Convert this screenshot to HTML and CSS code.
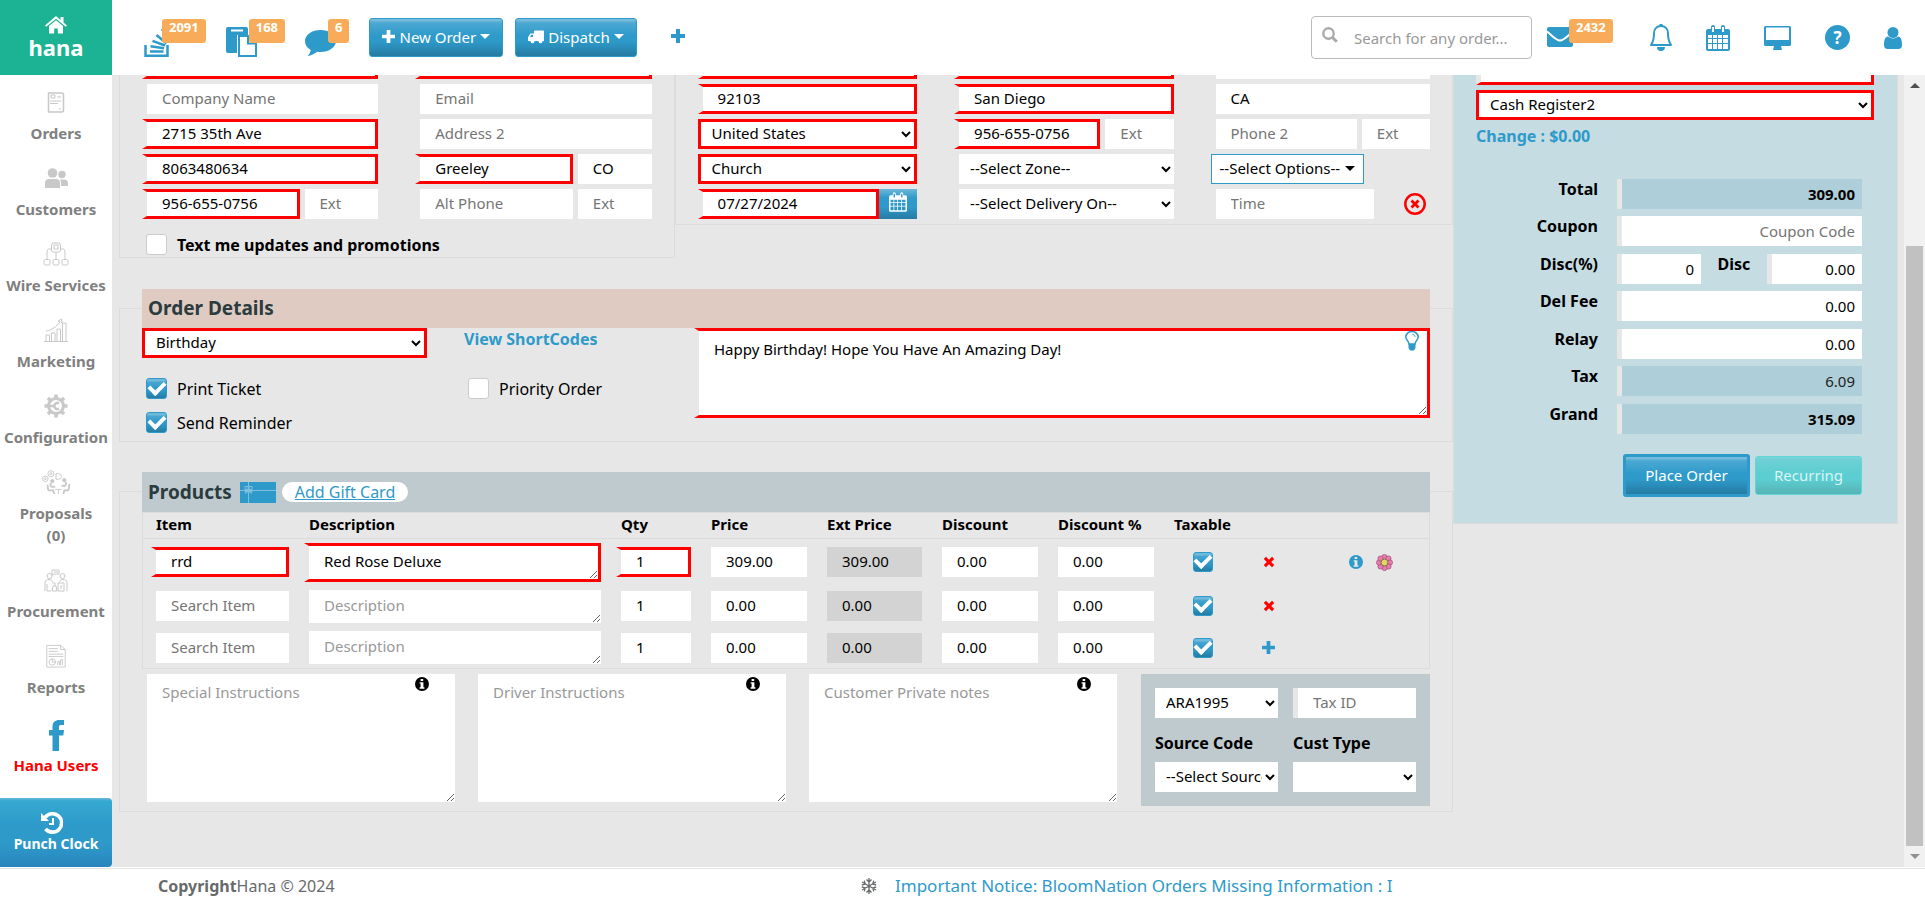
FILE: index.html
```html
<!DOCTYPE html>
<html lang="en">
<head>
<meta charset="utf-8">
<title>Hana - Order Entry</title>
<link rel="stylesheet" href="styles.css">
</head>
<body>
<svg class="sprite" aria-hidden="true">
  <symbol id="check-x" viewBox="0 0 12 12"><path d="M3 .8 6 3.8 9 .8 11.2 3 8.2 6l3 3L9 11.2l-3-3-3 3L.8 9l3-3-3-3z"/></symbol>
  <symbol id="plus" viewBox="0 0 14 14"><path d="M5 0h4v5h5v4H9v5H5V9H0V5h5z"/></symbol>
  <symbol id="info" viewBox="0 0 14 14"><path fill-rule="evenodd" d="M7 0a7 7 0 1 1 0 14A7 7 0 0 1 7 0zM5.600 2v2h2.600V2zM4.600 5.200v1.300h1v3.700h-1v1.500h4.800v-1.500h-1v-5z"/></symbol>
  <symbol id="calendar" viewBox="0 0 24 26"><path fill-rule="evenodd" d="M2 4h3V2a2 2 0 0 1 4 0v2h6V2a2 2 0 0 1 4 0v2h3a2 2 0 0 1 2 2v18a2 2 0 0 1-2 2H2a2 2 0 0 1-2-2V6a2 2 0 0 1 2-2zm4-2v5h2V2zm10 0v5h2V2zM2 10v3h4v-3zm5 0v3h4v-3zm5 0v3h4v-3zm5 0v3h5v-3zM2 14v4h4v-4zm5 0v4h4v-4zm5 0v4h4v-4zm5 0v4h5v-4zM2 19v5h4v-5zm5 0v5h4v-5zm5 0v5h4v-5zm5 0v5h5v-5z"/></symbol>
</svg>

<header class="topbar">
  <a class="logo" href="#">
    <svg width="22" height="18" viewBox="0 0 22 18" aria-hidden="true"><path d="M11 0 0 9.500l1.200 1.300L11 2.700l9.800 8.100L22 9.500 18.500 6.500V1h-3v3zM11 4.200 4 10v7.500h5.200V12.500h3.600v5H18V10z"/></svg>
    <span>hana</span>
  </a>
  <nav class="queue">
    <a class="counter" href="#" aria-label="Orders waiting">
      <svg width="26" height="30" viewBox="0 0 26 30" fill="none" stroke="#2e9aca" aria-hidden="true"><path stroke-width="2.500" d="M1.500 18v10.700h22V18"/><path stroke-width="2.500" d="M6 24.500h13.500M6.500 19.300l13.500 2M8.500 13.800l12.500 4.700M12.500 8l10 8.500M18 2l6.500 11"/></svg>
      <span class="badge">2091</span>
    </a>
    <a class="counter" href="#" aria-label="Copied orders">
      <svg width="31" height="30" viewBox="0 0 31 30" aria-hidden="true"><path fill="#2e9aca" d="M2 0h18a2 2 0 0 1 2 2v24H2a2 2 0 0 1-2-2V2a2 2 0 0 1 2-2z"/><path fill="#fff" d="M5 2.500h12v2H5zM11 8h14l6 6v16H11z"/><path fill="#fff" stroke="#2e9aca" stroke-width="2" d="M13 9h9v7.500h8V29H13zM22 9l8 7.500"/></svg>
      <span class="badge">168</span>
    </a>
    <a class="counter" href="#" aria-label="Messages">
      <svg width="31" height="26" viewBox="0 0 31 26" aria-hidden="true"><path fill="#2e9aca" d="M15.500 0C24 0 31 4.800 31 11s-7 11-15.500 11c-1.200 0-2.300-.1-3.400-.3C9.500 24 6 25.600 2.500 26c1.800-1.500 3-3.600 3.200-6C2.200 18 0 14.800 0 11 0 4.800 7 0 15.500 0z"/></svg>
      <span class="badge">6</span>
    </a>
  </nav>
  <div class="actions">
    <button class="btn" type="button"><svg width="13" height="13" aria-hidden="true"><use href="#plus"/></svg>New Order<i class="caret"></i></button>
    <button class="btn" type="button"><svg width="16" height="14" viewBox="0 0 16 14" aria-hidden="true"><path fill-rule="evenodd" d="M6 1.500A1 1 0 0 1 7 .5h8a1 1 0 0 1 1 1V11h-1.500a2 2 0 0 1-4 0h-4a2 2 0 0 1-4 0H0V7l2.500-3.500H6zM2 7h3V4.700H3.400z"/><circle cx="4.500" cy="11.500" r="1.700"/><circle cx="12.500" cy="11.500" r="1.700"/></svg>Dispatch<i class="caret"></i></button>
    <button class="icon-btn" type="button" aria-label="Add"><svg width="14" height="14" aria-hidden="true"><use href="#plus"/></svg></button>
  </div>
  <div class="tools">
    <label class="search">
      <svg width="16" height="16" viewBox="0 0 16 16" fill="none" stroke="#aaa" aria-hidden="true"><circle cx="6.500" cy="6.500" r="5.200" stroke-width="2.400"/><path stroke-width="3" d="m10.500 10.500 4.300 4.300"/></svg>
      <input type="search" placeholder="Search for any order..." aria-label="Search for any order">
    </label>
    <a class="counter mail" href="#" aria-label="Mail">
      <svg width="26" height="20" viewBox="0 0 26 20" aria-hidden="true"><path fill="#2e9aca" d="M0 2a2 2 0 0 1 2-2h22a2 2 0 0 1 2 2v16a2 2 0 0 1-2 2H2a2 2 0 0 1-2-2z"/><path fill="none" stroke="#fff" stroke-width="2" d="M0 4.500c4 3 9 9 13 9s9-6 13-9"/></svg>
      <span class="badge">2432</span>
    </a>
    <div class="shortcuts">
      <a href="#" aria-label="Notifications"><svg width="22" height="27" viewBox="0 0 22 27" aria-hidden="true"><path fill="none" stroke="#2e9aca" stroke-width="2" stroke-linejoin="round" d="M11 2c4.500 0 7 3.200 7 7.500 0 6 1 8.500 3 11.500H1c2-3 3-5.500 3-11.500C4 5.200 6.500 2 11 2z"/><path fill="#2e9aca" d="M9.500 0h3v2h-3zM7 23h8a4 4 0 0 1-8 0z"/></svg></a>
      <a href="#" aria-label="Calendar"><svg width="24" height="26" aria-hidden="true"><use href="#calendar"/></svg></a>
      <a href="#" aria-label="Display"><svg width="27" height="24" viewBox="0 0 27 24" aria-hidden="true"><path fill-rule="evenodd" d="M1.500 0h24A1.500 1.500 0 0 1 27 1.500v17a1.500 1.500 0 0 1-1.500 1.500H17l1 4H9l1-4H1.500A1.500 1.500 0 0 1 0 18.500v-17A1.500 1.500 0 0 1 1.500 0zM2 1.500V14h23V1.500z"/></svg></a>
      <a href="#" aria-label="Help"><span class="help">?</span></a>
      <a href="#" aria-label="Account"><svg width="18" height="22" viewBox="0 0 18 22" aria-hidden="true"><circle cx="9" cy="5.500" r="5.500"/><path d="M4 9.500a7 7 0 0 0 10 0c3 .5 4 3.500 4 8.500 0 2.500-1.500 4-3.500 4h-11C1.500 22 0 20.500 0 18c0-5 1-8 4-8.500z"/></svg></a>
    </div>
  </div>
</header>

<div class="body">
  <nav class="sidebar">
    <a class="nav-item" href="#"><svg width="24" height="24" viewBox="0 0 24 24"><path d="M4.500 3h13a2 2 0 0 1 2 2v15a2 2 0 0 1-2 2h-13z" stroke-width="1.500"/><path d="M7 5h4v3H7zM6 11h11M6 13.500h8M13 7h4M15 19h2"/></svg>Orders</a>
    <a class="nav-item" href="#"><svg width="24" height="24" viewBox="0 0 24 24"><g fill="#c8c8c8" stroke="none"><circle cx="8.500" cy="7" r="4.800"/><circle cx="18" cy="8.500" r="3.700"/><path d="M1 22v-5c0-3 2-4 4-4h7c2 0 4 1 4 4v5zM17 20v-4l-1-2.500h4c2.500 0 4 1 4 3.500v3z"/></g></svg>Customers</a>
    <a class="nav-item" href="#"><svg width="26" height="24" viewBox="0 0 26 24"><rect x="8.500" y="1" width="9" height="9" rx="2"/><rect x="11" y="3" width="4" height="4"/><path d="M13 10v7M8.500 7H6C4 7 4 9 4 17M17.500 7H20c2 0 2 2 2 10"/><rect x="1" y="17.500" width="6" height="5.500" rx="1.500"/><rect x="10" y="17.500" width="6" height="5.500" rx="1.500"/><rect x="19" y="17.500" width="6" height="5.500" rx="1.500"/></svg>Wire Services</a>
    <a class="nav-item" href="#"><svg width="26" height="24" viewBox="0 0 26 24"><path d="M1 23.500h24M3 23v-6h3.500v6M8.500 23v-8H12v8M14 23V11h3.500v12M19.500 23V5H23v18M3 13c6-1 10-4 14-9l-2-.8L18.500 1l.5 4-1.500-1"/></svg>Marketing</a>
    <a class="nav-item" href="#"><svg width="24" height="24" viewBox="0 0 24 24"><circle cx="12" cy="12" r="7.500" stroke-width="3"/><path stroke-width="3.500" d="M12 .5v4M12 19.500v4M.5 12h4M19.500 12h4M4 4l2.500 2.500M17.500 17.500 20 20M4 20l2.500-2.500M17.500 6.500 20 4"/><path stroke-width="2.500" d="M4 12h6M15 9.500a3 3 0 1 0 0 5"/></svg>Configuration</a>
    <a class="nav-item" href="#"><svg width="30" height="26" viewBox="0 0 30 26"><circle cx="3.500" cy="9.500" r="3"/><circle cx="3.500" cy="9.500" r="1"/><circle cx="9.500" cy="4" r="3.300"/><circle cx="9.500" cy="4" r="1.200"/><path d="M15 10V4h3a3 3 0 0 1 0 6zM14 21h7M17.500 21v5"/><circle cx="24" cy="11" r="1.800" fill="#c8c8c8"/><circle cx="11" cy="12" r="1.800" fill="#c8c8c8"/><path stroke-width="2" d="M6 16c0 4 0 5 1 6h5l1 4M29.500 15c-.5 4 0 6-1.500 7h-4l-1 4M9 14c0 4 1 5 5 4M26 13c0 4-1 5-5 4"/></svg>Proposals<br>(0)</a>
    <a class="nav-item" href="#"><svg width="24" height="24" viewBox="0 0 24 24"><path d="M8 2h7v4H10L8 7zM10 4h4M3 8a2.500 2.500 0 1 1 5 0 2.500 2.500 0 1 1-5 0zM16 8a2.500 2.500 0 1 1 5 0 2.500 2.500 0 1 1-5 0zM1 23v-8c0-3 2-3.500 4-3.500s4 1 4 4M3 16v7h4M23 23v-8c0-3-2-3.500-4-3.500s-3 1-4 3M14 15h6v8h-6zM16 18h2M16 20h2M9 18h3l1 5H8zM10 15h1v3"/></svg>Procurement</a>
    <a class="nav-item" href="#"><svg width="24" height="26" viewBox="0 0 24 26"><path d="M2 1.500h15L22 6v19H2zM17 1.500V6h5M4 5h10M4 8h10M4 11h16M4 13.500h16M14 23v-4h2v4M17 23v-6h2v6"/><circle cx="8" cy="19.500" r="3.500"/><path d="M8 19.500V16M8 19.500h3.500"/></svg>Reports</a>
    <a class="nav-item users" href="#"><svg width="15" height="31" viewBox="0 0 15 31"><path fill="#2e9aca" stroke="none" d="M15 0v5h-3c-1.500 0-2 .8-2 2.300V10h5l-.7 5.500H10V31H3.500V15.500H0V10h3.500V6.500C3.500 2.200 6 0 10.500 0z"/></svg>Hana Users</a>
    <button class="punch" type="button"><svg width="22" height="22" viewBox="0 0 22 22" fill="none" stroke="#fff" aria-hidden="true"><path stroke-width="3.600" d="M4 5.500A9.200 9.200 0 1 1 4.500 17"/><path stroke-width="2" d="M12 6v6H8"/><path fill="#fff" stroke="none" d="M0 1v8h8z"/></svg>Punch Clock</button>
  </nav>

  <main class="content">
    <div class="workspace">
      <div class="order-form">
        <div class="people">
          <section class="panel sender" aria-label="Customer">
            <div class="cols two">
              <input class="req" aria-label="First name"><input class="req" aria-label="Last name">
              <input placeholder="Company Name" aria-label="Company Name"><input placeholder="Email" aria-label="Email">
              <input class="req" value="2715 35th Ave" aria-label="Address"><input placeholder="Address 2" aria-label="Address 2">
              <input class="req" value="8063480634" aria-label="Zip">
              <div class="pair"><input class="req" value="Greeley" aria-label="City"><input value="CO" aria-label="State"></div>
              <div class="pair"><input class="req" value="956-655-0756" aria-label="Phone"><input placeholder="Ext" aria-label="Phone ext"></div>
              <div class="pair"><input placeholder="Alt Phone" aria-label="Alt Phone"><input placeholder="Ext" aria-label="Alt phone ext"></div>
            </div>
            <label class="check strong"><input type="checkbox">Text me updates and promotions</label>
          </section>
          <section class="panel recipient" aria-label="Recipient">
            <div class="cols three">
              <input class="req" aria-label="Recipient address"><input class="req" aria-label="Attention"><input aria-label="Address 2">
              <input class="req" value="92103" aria-label="Recipient zip"><input class="req" value="San Diego" aria-label="Recipient city"><input value="CA" aria-label="Recipient state">
              <select class="req" aria-label="Country"><option>United States</option></select>
              <div class="pair"><input class="req" value="956-655-0756" aria-label="Recipient phone"><input placeholder="Ext" aria-label="Recipient ext"></div>
              <div class="pair"><input placeholder="Phone 2" aria-label="Phone 2"><input placeholder="Ext" aria-label="Phone 2 ext"></div>
              <select class="req" aria-label="Location type"><option>Church</option></select>
              <select class="inset" aria-label="Zone"><option>--Select Zone--</option></select>
              <button class="options" type="button">--Select Options--<i class="caret"></i></button>
              <div class="date"><input class="req" value="07/27/2024" aria-label="Delivery date"><button type="button" aria-label="Pick a date"><svg width="18" height="20" aria-hidden="true"><use href="#calendar"/></svg></button></div>
              <select class="inset" aria-label="Delivery on"><option>--Select Delivery On--</option></select>
              <div class="time"><input placeholder="Time" aria-label="Time"><button class="icon-btn danger" type="button" aria-label="Remove recipient"><svg width="22" height="22" viewBox="0 0 22 22" aria-hidden="true"><circle cx="11" cy="11" r="9.700" fill="none" stroke="red" stroke-width="2.500"/><path d="m8.500 6.500 2.500 2.500 2.500-2.500 2 2L13 11l2.500 2.500-2 2L11 13l-2.500 2.500-2-2L9 11 6.500 8.500z"/></svg></button></div>
            </div>
          </section>
        </div>

        <section class="panel details">
          <h2 class="bar peach">Order Details</h2>
          <div class="detail-grid">
            <div class="stack">
              <select class="req" aria-label="Occasion"><option>Birthday</option></select>
              <div class="checks">
                <label class="check"><input type="checkbox" checked>Print Ticket</label>
                <label class="check"><input type="checkbox" checked>Send Reminder</label>
              </div>
            </div>
            <div class="stack">
              <a class="codes" href="#">View ShortCodes</a>
              <label class="check"><input type="checkbox">Priority Order</label>
            </div>
            <div class="message">
              <textarea class="req" aria-label="Card message">Happy Birthday! Hope You Have An Amazing Day!</textarea>
              <svg class="bulb" width="14" height="20" viewBox="0 0 14 20" aria-hidden="true"><path fill="#fff" stroke="#2e9aca" stroke-width="1.500" d="M4 13c0-3-3.200-4-3.200-7a6.200 5.500 0 0 1 12.400 0c0 3-3.200 4-3.200 7z"/><path fill="none" stroke="#2e9aca" d="M7.500 3.500c1.500 0 2.500.8 2.500 2.300"/><path fill="#2e9aca" d="M3.500 13h7v4L9 19.500H5L3.500 17z"/></svg>
            </div>
          </div>
        </section>

        <section class="panel products">
          <div class="bar slate"><h2>Products</h2>
            <svg width="36" height="21" viewBox="0 0 36 21" aria-hidden="true"><path fill="#2e9aca" d="M0 0h36v21H0z"/><path fill="none" stroke="#7ec0dd" d="M0 8.500h36M8.500 0v21M5 4.500h3v3H5zM9 4.500h3v3H9zM5 9.500h3l-2 2zM12 9.500H9l2 2z"/></svg>
            <a class="pill" href="#">Add Gift Card</a>
          </div>
          <table class="items">
            <colgroup><col class="c-item"><col class="c-desc"><col class="c-qty"><col class="c-num"><col class="c-mid"><col class="c-num"><col class="c-num"><col class="c-tax"><col class="c-act"><col></colgroup>
            <thead><tr><th>Item</th><th>Description</th><th>Qty</th><th>Price</th><th>Ext Price</th><th>Discount</th><th>Discount %</th><th>Taxable</th><th></th><th></th></tr></thead>
            <tbody>
              <tr>
                <td><input class="req" value="rrd" aria-label="Item"></td><td><textarea class="req" rows="1" aria-label="Description">Red Rose Deluxe</textarea></td><td><input class="req" value="1" aria-label="Qty"></td><td><input value="309.00" aria-label="Price"></td><td><input class="locked" value="309.00" readonly aria-label="Ext Price"></td><td><input value="0.00" aria-label="Discount"></td><td><input value="0.00" aria-label="Discount %"></td>
                <td class="mid"><input type="checkbox" checked aria-label="Taxable"></td>
                <td class="mid"><button class="icon-btn danger" type="button" aria-label="Remove"><svg width="12" height="12" aria-hidden="true"><use href="#check-x"/></svg></button></td>
                <td class="mid extra"><div><button class="icon-btn" type="button" aria-label="Item info"><svg width="14" height="14" aria-hidden="true"><use href="#info"/></svg></button><button class="icon-btn" type="button" aria-label="Arrangement"><svg width="17" height="17" viewBox="0 0 17 17" aria-hidden="true"><g fill="#e87bb0" stroke="#9c5277" stroke-width=".7"><circle cx="8.500" cy="3" r="2.600"/><circle cx="12.500" cy="4.500" r="2.600"/><circle cx="14" cy="8.500" r="2.600"/><circle cx="12.500" cy="12.500" r="2.600"/><circle cx="8.500" cy="14" r="2.600"/><circle cx="4.500" cy="12.500" r="2.600"/><circle cx="3" cy="8.500" r="2.600"/><circle cx="4.500" cy="4.500" r="2.600"/></g><circle cx="8.500" cy="8.500" r="3.400" fill="#e3d56a" stroke="#6d6a2a" stroke-width=".8"/></svg></button></div></td>
              </tr>
              <tr>
                <td><input placeholder="Search Item" aria-label="Item"></td><td><textarea rows="1" placeholder="Description" aria-label="Description"></textarea></td><td><input value="1" aria-label="Qty"></td><td><input value="0.00" aria-label="Price"></td><td><input class="locked" value="0.00" readonly aria-label="Ext Price"></td><td><input value="0.00" aria-label="Discount"></td><td><input value="0.00" aria-label="Discount %"></td>
                <td class="mid"><input type="checkbox" checked aria-label="Taxable"></td>
                <td class="mid"><button class="icon-btn danger" type="button" aria-label="Remove"><svg width="12" height="12" aria-hidden="true"><use href="#check-x"/></svg></button></td><td></td>
              </tr>
              <tr>
                <td><input placeholder="Search Item" aria-label="Item"></td><td><textarea rows="1" placeholder="Description" aria-label="Description"></textarea></td><td><input value="1" aria-label="Qty"></td><td><input value="0.00" aria-label="Price"></td><td><input class="locked" value="0.00" readonly aria-label="Ext Price"></td><td><input value="0.00" aria-label="Discount"></td><td><input value="0.00" aria-label="Discount %"></td>
                <td class="mid"><input type="checkbox" checked aria-label="Taxable"></td>
                <td class="mid"><button class="icon-btn" type="button" aria-label="Add row"><svg width="13" height="13" aria-hidden="true"><use href="#plus"/></svg></button></td><td></td>
              </tr>
            </tbody>
          </table>
          <div class="lower">
            <div class="notes">
              <div class="note"><textarea placeholder="Special Instructions" aria-label="Special Instructions"></textarea><svg width="14" height="14" aria-hidden="true"><use href="#info"/></svg></div>
              <div class="note"><textarea placeholder="Driver Instructions" aria-label="Driver Instructions"></textarea><svg width="14" height="14" aria-hidden="true"><use href="#info"/></svg></div>
              <div class="note"><textarea placeholder="Customer Private notes" aria-label="Customer Private notes"></textarea><svg width="14" height="14" aria-hidden="true"><use href="#info"/></svg></div>
            </div>
            <div class="source">
              <select aria-label="Clerk"><option>ARA1995</option></select>
              <input placeholder="Tax ID" aria-label="Tax ID">
              <label for="source-code">Source Code</label>
              <label for="cust-type">Cust Type</label>
              <select id="source-code"><option>--Select Source--</option></select>
              <select id="cust-type"><option></option></select>
            </div>
          </div>
        </section>
      </div>

      <aside class="summary">
        <input class="req" aria-label="Payment">
        <select class="req" aria-label="Register"><option>Cash Register2</option></select>
        <p class="change">Change : $0.00</p>
        <div class="totals">
          <div class="line"><label for="total">Total</label><input id="total" class="calc bold" value="309.00" readonly></div>
          <div class="line"><label for="coupon">Coupon</label><input id="coupon" placeholder="Coupon Code"></div>
          <div class="line"><label for="discp">Disc(%)</label><div class="split"><input id="discp" value="0"><label for="disc">Disc</label><input id="disc" value="0.00"></div></div>
          <div class="line"><label for="fee">Del Fee</label><input id="fee" value="0.00"></div>
          <div class="line"><label for="relay">Relay</label><input id="relay" value="0.00"></div>
          <div class="line"><label for="tax">Tax</label><input id="tax" class="calc" value="6.09" readonly></div>
          <div class="line"><label for="grand">Grand</label><input id="grand" class="calc bold" value="315.09" readonly></div>
        </div>
        <div class="submit">
          <button class="btn place" type="button">Place Order</button>
          <button class="btn recurring" type="button">Recurring</button>
        </div>
      </aside>
    </div>
  </main>
  <div class="scrollbar" aria-hidden="true"><i class="up"></i><div class="thumb"></div><i class="down"></i></div>
</div>

<footer class="footer">
  <p><b>Copyright</b>Hana © 2024</p>
  <svg width="16" height="16" viewBox="0 0 16 16" fill="none" stroke="#676a6c" stroke-width="1.300" aria-hidden="true"><path d="M8 0v16M1 4l14 8M1 12l14-8M5.500 1.500 8 4l2.500-2.500M5.500 14.500 8 12l2.500 2.500M.8 7l3.400-.9L3.300 2.700M12.700 2.700l-.9 3.400 3.400.9M.8 9l3.400.9-.9 3.400M12.700 13.300l-.9-3.400 3.400-.9"/></svg>
  <a class="notice" href="#">Important Notice: BloomNation Orders Missing Information : I</a>
</footer>
</body>
</html>
```

FILE: styles.css
```css
* { box-sizing: border-box; }
body {
  margin: 0;
  height: 100vh;
  display: flex;
  flex-direction: column;
  overflow: hidden;
  background: #fff;
  color: #000;
  font: 15px/20px "Noto Sans", sans-serif;
}
a { text-decoration: none; color: #2e9aca; }
svg { flex: none; display: block; }
svg:not([fill]) { fill: currentColor; }
.sprite { position: absolute; width: 0; height: 0; }
h2, p { margin: 0; }
h2 { font-size: 19px; line-height: 24px; color: #2c3b3d; }
input, select, textarea, button { font: inherit; color: #000; border-radius: 0; margin: 0; min-width: 0; }
::placeholder { color: #757575; opacity: 1; }
textarea::placeholder { color: #999; }

/* form controls */
input, textarea {
  width: 100%;
  background: #fff;
  border: 0 solid #e7e7e7;
  border-left-width: 5px;
  padding: 0 15px 2px;
}
input, select { height: 30px; }
textarea { display: block; }
select { width: 100%; background: #fff; border: 0; padding: 0 0 2px 7px; }
select.inset { border-left: 5px solid #e7e7e7; }
.req { border: 3px solid red; }
input.req, textarea.req { border-left: 5px solid #e7e7e7; }
input[type="checkbox"] {
  appearance: none;
  flex: none;
  display: grid;
  place-items: center;
  width: 21px;
  height: 21px;
  padding: 0;
  background: #fff;
  border: 1px solid #ccc;
  border-radius: 3px;
}
input[type="checkbox"]:checked {
  border-color: #2e9aca;
  background: linear-gradient(#6fb9da 0, #6fb9da 2px, #4aa6d1 3px, #2e9aca 45%, #2e9aca 60%, #267ba2);
}
input[type="checkbox"]:checked::after {
  content: "";
  width: 12px;
  height: 7px;
  margin-bottom: 5px;
  border: solid #fff;
  border-width: 0 0 4px 4px;
  transform: rotate(-45deg);
}
.check { display: flex; align-items: center; gap: 10px; padding-left: 4px; height: 21px; font-size: 16px; }
.strong { font-weight: 700; }
.caret { border: 5px solid transparent; border-top-color: currentColor; border-bottom: 0; }
.btn {
  height: 39px;
  padding: 0 12px 2px;
  display: flex;
  align-items: center;
  justify-content: center;
  gap: 4px;
  color: #fff;
  border: 1px solid #2e9aca;
  border-radius: 3px;
  background: linear-gradient(#7dbfdd 0, #6cb7d9 2px, #4ba8d2 4px, #2e9aca 45%, #2e9aca 60%, #267ba2);
}
.icon-btn { border: 0; padding: 0; background: none; color: #2e9aca; display: inline-block; vertical-align: middle; }
.danger { color: red; }

/* top bar */
.topbar { flex: none; height: 75px; display: flex; align-items: flex-start; }
.logo {
  width: 112px;
  height: 75px;
  padding-top: 16px;
  display: flex;
  flex-direction: column;
  align-items: center;
  background: #1bb394;
  color: #fff;
  font-size: 22px;
  font-weight: 700;
  line-height: 26px;
}
.queue { display: flex; padding: 19px 0 0 32px; gap: 20px; }
.counter { display: flex; align-items: flex-start; }
.counter svg { margin-top: 8px; }
.counter:last-child svg { margin-top: 11px; }
.counter .badge { margin-left: -8px; }
.badge {
  position: relative;
  height: 24px;
  padding: 0 7px;
  border-radius: 3px;
  background: #f8ac59;
  color: #fff;
  font: 700 13px/17px "Open Sans", sans-serif;
}
.actions { display: flex; align-items: center; gap: 12px; padding: 18px 0 0 20px; }
.actions .icon-btn { margin: 0 0 3px 22px; }
.tools { display: flex; align-items: flex-start; margin-left: auto; padding: 16px 23px 0 0; }
.search { display: flex; width: 221px; height: 43px; padding-left: 10px; border: 1px solid #bbb; border-radius: 4px; }
.search svg { margin-top: 10px; }
.search input { height: 41px; border: 0; padding: 0 0 0 16px; background: none; outline: 0; }
.search ::placeholder { color: #999; }
.mail { padding: 3px 0 0 15px; width: 81px; }
.mail .badge { margin-left: -4px; }
.shortcuts { display: flex; align-items: center; gap: 34px; height: 43px; padding-left: 37px; }
.help {
  display: block;
  width: 25px;
  height: 25px;
  border-radius: 50%;
  background: #2e9aca;
  color: #fff;
  text-align: center;
  font: 700 17px/25px "Noto Sans", sans-serif;
}

/* frame */
.body { flex: 1; min-height: 0; display: flex; }
.sidebar { flex: none; width: 112px; padding-top: 15px; display: flex; flex-direction: column; background: #fff; }
.nav-item {
  flex: none;
  display: block;
  margin-bottom: 22px;
  text-align: center;
  white-space: nowrap;
  font-weight: 700;
  line-height: 22px;
  color: #808080;
}
.nav-item svg { height: 24px; margin: 0 auto 8px; fill: none; stroke: #c8c8c8; }
.nav-item.users { color: red; }
.nav-item.users svg { height: 31px; margin: 0 auto 3px; }
.punch {
  height: 70px;
  margin-top: auto;
  padding: 0;
  display: flex;
  flex-direction: column;
  align-items: center;
  justify-content: center;
  border: 0;
  border-radius: 0 4px 4px 0;
  background: linear-gradient(#6cb7d9 0, #35a9d0 3px, #2e9aca 40%, #2e9aca 65%, #2985bd);
  color: #fff;
  font-size: 14px;
  font-weight: 700;
}
.punch svg { margin-right: 8px; }
.content { flex: 1; min-width: 0; overflow: hidden; background: #e7e7e7; }
.workspace { display: flex; align-items: flex-start; margin-top: -26px; padding: 0 6px 0 7px; }
.order-form { flex: 1; min-width: 0; }
.scrollbar { flex: none; width: 21px; padding: 8px 2px; display: flex; flex-direction: column; align-items: center; background: #f1f1f1; }
.thumb { width: 17px; flex: 1; margin: 158px 0 8px; background: #c1c1c1; }
.scrollbar i { border: 5px solid transparent; }
.scrollbar .up { border-top-width: 0; border-bottom-color: #505050; }
.scrollbar .down { border-bottom-width: 0; border-top-color: #909090; }

/* order panels */
.panel { border: 1px solid #dcdcdc; padding: 0 22px; }
.people { display: grid; grid-template-columns: 556fr 779fr; align-items: start; }
.sender { border-top: 0; }
.recipient { border-top: 0; padding-bottom: 5px; }
.cols { display: grid; column-gap: 37px; row-gap: 5px; }
.two { grid-template-columns: repeat(2, minmax(0, 1fr)); }
.three { grid-template-columns: repeat(3, minmax(0, 1fr)); }
.pair { display: grid; grid-template-columns: 2fr 1fr; }
.sender .check { margin: 15px 0 2px; }
.options { justify-self: start; height: 30px; padding: 0 8px 2px; display: flex; align-items: center; gap: 5px; border: 1px solid #2e9aca; background: #fff; }
.date { display: flex; }
.date button { flex: none; width: 38px; padding: 0 10px 4px; border: 0; color: #fff; background: linear-gradient(#6cb7d9, #2e9aca 30%, #2e9aca 60%, #267ba2); }
.time { display: flex; align-items: center; justify-content: space-between; padding-right: 4px; }
.time input { width: 76%; }
.details { margin-top: 50px; padding-bottom: 8px; }
.products { margin-top: 49px; padding-bottom: 5px; }
.bar { margin-top: -20px; height: 39px; padding: 0 6px 2px; display: flex; align-items: center; }
.peach { background: #dfcbc2; }
.slate { height: 40px; padding-bottom: 0; background: #bfcacf; }
.slate svg { margin-left: 8px; }
.pill { margin-left: 6px; padding: 0 13px; border-radius: 10px; background: #fff; font-size: 16px; text-decoration: underline; }
.detail-grid { display: grid; grid-template-columns: 322fr 230fr 736fr; align-items: start; }
.stack > select { width: calc(100% - 37px); margin-bottom: 20px; display: block; }
.checks { display: grid; gap: 13px; }
.codes { display: block; height: 50px; line-height: 22px; font-size: 16px; font-weight: 700; }
.message { position: relative; }
.message textarea { height: 90px; padding: 8px 15px; }
.bulb { position: absolute; top: 3px; right: 11px; }

/* product rows */
.items { width: 100%; table-layout: fixed; border: 1px solid #dcdcdc; border-collapse: separate; border-spacing: 0; }
.items th { height: 26px; padding: 0 0 0 13px; text-align: left; vertical-align: top; border-bottom: 1px solid #dcdcdc; line-height: 22px; white-space: nowrap; }
.items td { height: 42px; padding: 0 7px 0 8px; vertical-align: middle; }
.items tbody tr:first-child td { height: 46px; }
.items tbody tr:last-child td { height: 41px; }
.items td > input { display: block; }
.items textarea { height: 33px; padding: 4px 15px 0; overflow: hidden; line-height: 22px; }
.items textarea.req { height: 39px; }
.items input[type="checkbox"] { width: 20px; height: 20px; display: grid; margin: auto; }
.items .mid { text-align: center; line-height: 0; }
.items .locked { background: #d3d3d3; }
.c-item { width: 153px; }
.c-desc { width: 312px; }
.c-qty { width: 90px; }
.c-num { width: 116px; }
.c-mid { width: 115px; }
.c-tax { width: 82px; }
.c-act { width: 50px; }
.extra div { display: flex; align-items: center; justify-content: center; gap: 13px; padding-left: 18px; }
.lower { display: grid; grid-template-columns: 975fr 289fr; column-gap: 24px; margin-top: 5px; }
.notes { display: grid; grid-template-columns: repeat(3, 1fr); column-gap: 18px; align-items: start; }
.note { position: relative; }
.note textarea { height: 128px; padding: 8px 15px; }
.note svg { position: absolute; top: 3px; right: 26px; }
.source { display: grid; grid-template-columns: 1fr 1fr; column-gap: 15px; padding: 14px; background: #bfcacf; }
.source label { padding: 15px 0 9px; font-size: 16px; font-weight: 700; white-space: nowrap; }

/* payment summary */
.summary { flex: none; width: 445px; margin-top: 6px; padding: 0 23px 26px 22px; display: grid; background: #c5dce3; border: 1px solid #dcdcdc; border-top: 0; row-gap: 5px; }
.change { height: 49px; line-height: 22px; font-size: 16px; font-weight: 700; color: #2e9aca; }
.totals { padding-right: 12px; }
.line { display: grid; grid-template-columns: 122px 1fr; column-gap: 19px; margin-bottom: 7px; }
.line:nth-child(even) { margin-bottom: 8px; }
.line label { font-size: 16px; font-weight: 700; line-height: 20px; text-align: right; }
.line input { padding: 0 7px 0 10px; text-align: right; }
.line .calc { background: #aecfd9; color: #222; }
.line .bold { font-weight: 700; color: #000; }
.split { display: grid; grid-template-columns: 84fr 66fr 95fr; }
.split label { text-align: center; }
.submit { display: flex; justify-content: flex-end; align-items: center; gap: 5px; padding: 8px 12px 0 0; }
.place { height: 43px; width: 127px; border-width: 3px; }
.recurring { width: 107px; border-color: #5fd6d8; color: #d9f4f5; background: linear-gradient(#7fd3d8 0, #6dd0d6 3px, #5cced1 45%, #5cced1 60%, #57b3b6); }

/* footer */
.footer { flex: none; height: 36px; margin-top: 1px; padding: 0 0 2px 158px; border-top: 1px solid #e2e5e7; display: flex; align-items: center; color: #676a6c; font-size: 16px; }
.footer p { width: 703px; }
.notice { margin-left: 18px; white-space: nowrap; font-size: 17px; line-height: 24px; }
```
